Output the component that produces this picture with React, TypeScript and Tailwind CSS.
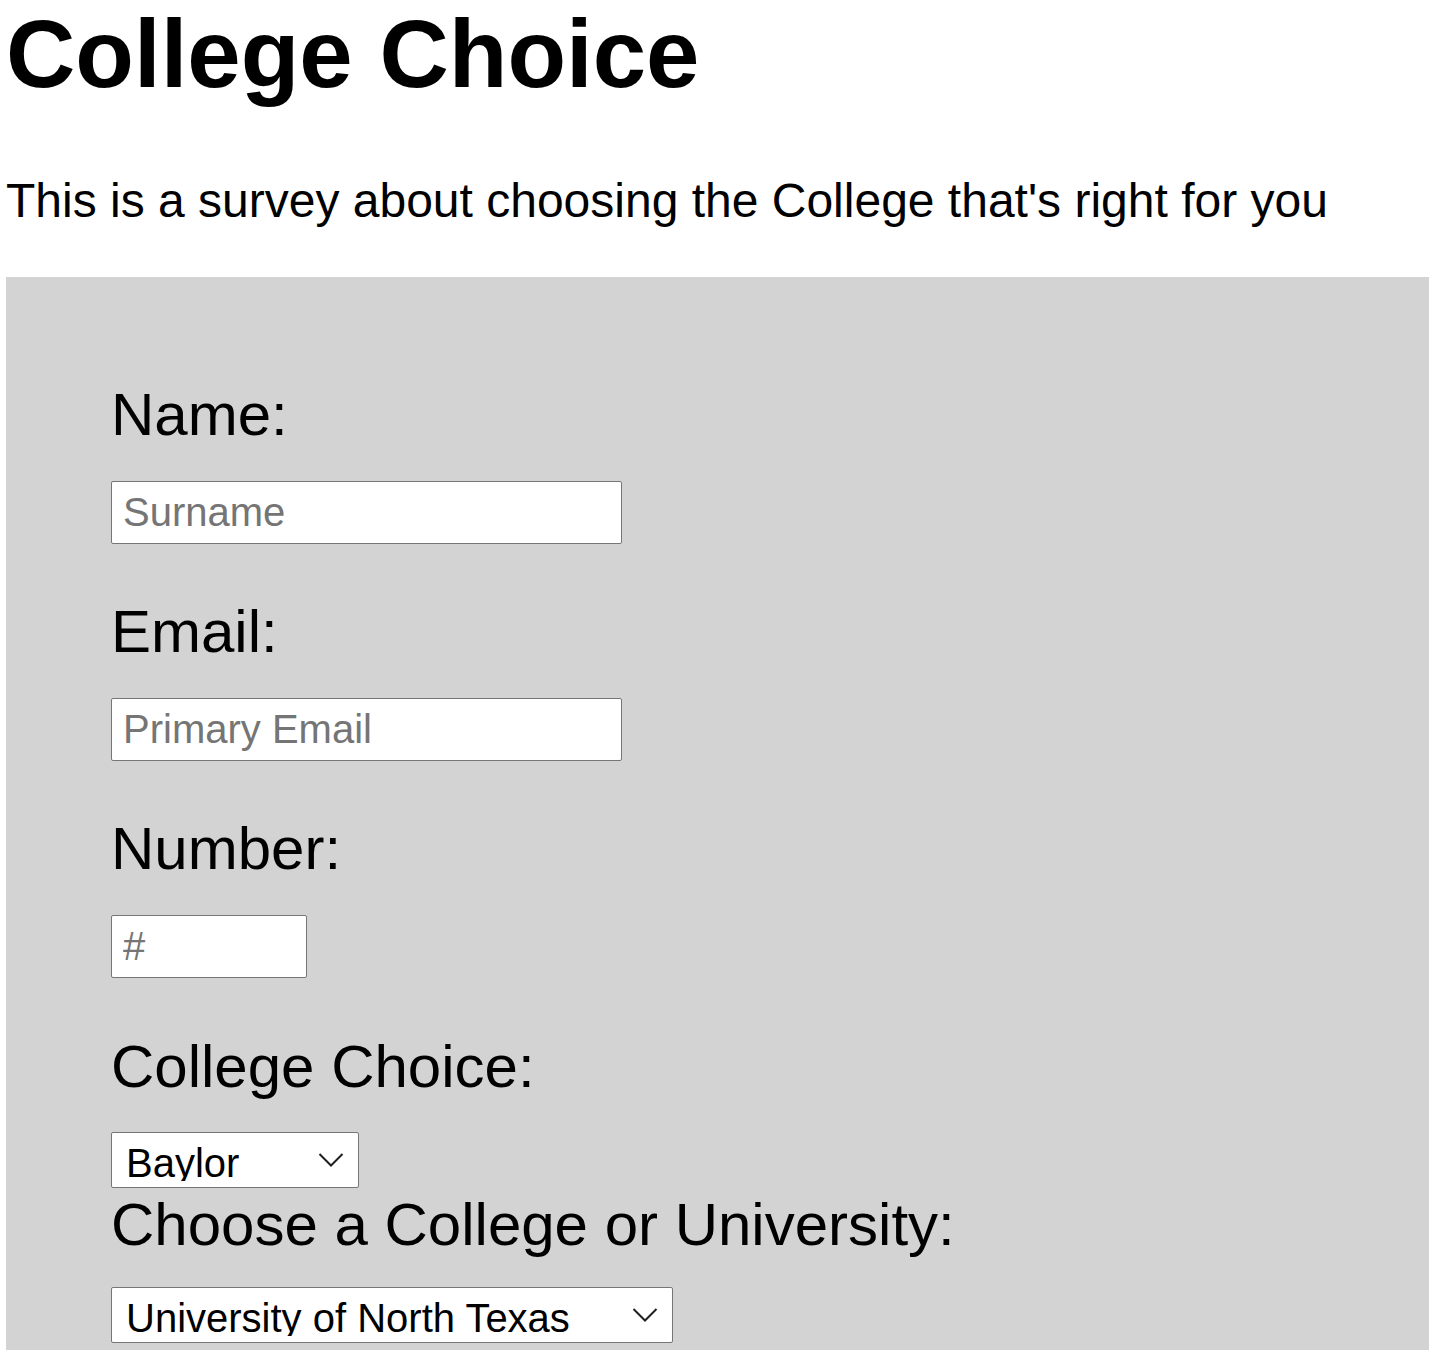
import React from "react";

const font = { fontFamily: '"Liberation Sans", Arial, sans-serif' };

const Chevron = () => (
  <svg
    width="26"
    height="15"
    viewBox="0 0 26 15"
    className="pointer-events-none absolute right-[15px] top-1/2 -translate-y-1/2"
  >
    <polyline
      points="1.5,1.5 13,13 24.5,1.5"
      fill="none"
      stroke="#1f1f1f"
      strokeWidth="2"
    />
  </svg>
);

const Label = ({ text, className }: { text: string; className?: string }) => (
  <label className={`block text-[60px] leading-[67px] text-black ${className ?? ""}`}>
    {text}
  </label>
);

const TextInput = ({
  placeholder,
  width,
  type = "text",
}: {
  placeholder: string;
  width: string;
  type?: string;
}) => (
  <input
    type={type}
    placeholder={placeholder}
    className={`mt-[33px] block h-[63px] ${width} rounded-[2px] border border-[#767676] bg-white pl-[11px] text-[40px] text-black outline-none placeholder:text-[#757575]`}
    style={font}
  />
);

const Select = ({
  options,
  width,
  className,
}: {
  options: string[];
  width: string;
  className?: string;
}) => (
  <div className={`relative ${width} ${className ?? ""}`}>
    <select
      className="block h-[56px] w-full appearance-none rounded-[2px] border border-[#767676] bg-white pb-[6px] pl-[14px] text-[40px] text-black outline-none"
      style={font}
      defaultValue={options[0]}
    >
      {options.map((o) => (
        <option key={o}>{o}</option>
      ))}
    </select>
    <Chevron />
  </div>
);

export default function App() {
  return (
    <div className="min-h-[1350px] w-[1429px] overflow-hidden bg-white text-black" style={font}>
      <h1 className="ml-[6px] text-[96px] font-bold leading-[107px]">College Choice</h1>
      <p className="ml-[6px] mt-[67px] text-[48px] leading-[54px]">
        This is a survey about choosing the College that's right for you
      </p>
      <form className="ml-[6px] mt-[49px] bg-[#d3d3d3] pb-[120px] pl-[105px] pt-[104px]">
        <Label text="Name:" />
        <TextInput placeholder="Surname" width="w-[511px]" />

        <Label text="Email:" className="mt-[54px]" />
        <TextInput placeholder="Primary Email" width="w-[511px]" type="email" />

        <Label text="Number:" className="mt-[54px]" />
        <TextInput placeholder="#" width="w-[196px]" type="text" />

        <Label text="College Choice:" className="mt-[55px]" />
        <Select
          options={["Baylor", "UT Austin", "Texas A&M", "Rice"]}
          width="w-[248px]"
          className="mt-[32px]"
        />

        <Label text="Choose a College or University:" className="mt-[3px]" />
        <Select
          options={[
            "University of North Texas",
            "Texas Tech University",
            "University of Houston",
          ]}
          width="w-[562px]"
          className="mt-[29px]"
        />
      </form>
    </div>
  );
}
